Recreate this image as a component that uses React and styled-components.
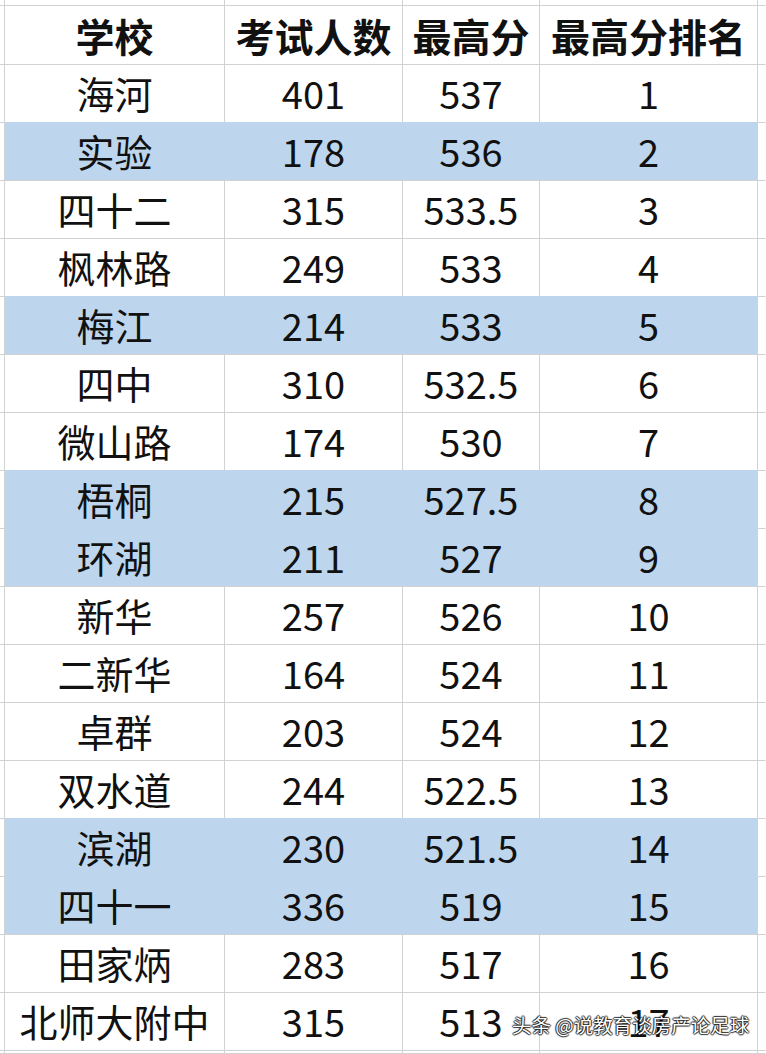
import React from "react";
import styled, { createGlobalStyle } from "styled-components";

const GlobalStyle = createGlobalStyle`
  html, body { margin: 0; padding: 0; background: #ffffff; }
  body { font-family: "Noto Sans CJK SC", "Noto Sans", sans-serif; }
`;

const GRID = "#d2d2d2";
const BLUE = "#bdd6ee";
const COLS = "5px 220px 178px 137px 218px 8px";

const Sheet = styled.div`
  position: relative;
  width: 766px;
  height: 1054px;
  overflow: hidden;
  background: #ffffff;
`;

const Row = styled.div`
  display: grid;
  grid-template-columns: ${COLS};
  height: ${(p) => p.$h}px;
`;

const Cell = styled.div`
  box-sizing: border-box;
  display: flex;
  align-items: center;
  justify-content: center;
  border-right: 1px solid ${(p) => (p.$innerHl ? BLUE : p.$last ? "transparent" : GRID)};
  border-bottom: 1px solid ${(p) => (p.$joinBelow ? BLUE : GRID)};
  background: ${(p) => (p.$hl ? BLUE : "transparent")};
  font-family: "Noto Sans CJK SC", "Noto Sans", sans-serif;
  font-size: ${(p) => (p.$header ? 39 : 38)}px;
  font-weight: ${(p) => (p.$header ? 700 : 400)};
  line-height: 58px;
  color: #111111;
  white-space: nowrap;
  overflow: visible;
`;

const Watermark = styled.div`
  position: absolute;
  left: 512px;
  top: 1010px;
  font-family: "Noto Sans CJK SC", "Noto Sans", sans-serif;
  font-size: 19.5px;
  line-height: 30px;
  color: #ffffff;
  white-space: pre;
  text-shadow:
    1px 0 1px rgba(0, 0, 0, 0.8),
    -1px 0 1px rgba(0, 0, 0, 0.8),
    0 1px 1px rgba(0, 0, 0, 0.8),
    0 -1px 1px rgba(0, 0, 0, 0.8);
`;

const header = ["学校", "考试人数", "最高分", "最高分排名"];

const rows = [
  ["海河", "401", "537", "1", false],
  ["实验", "178", "536", "2", true],
  ["四十二", "315", "533.5", "3", false],
  ["枫林路", "249", "533", "4", false],
  ["梅江", "214", "533", "5", true],
  ["四中", "310", "532.5", "6", false],
  ["微山路", "174", "530", "7", false],
  ["梧桐", "215", "527.5", "8", true],
  ["环湖", "211", "527", "9", true],
  ["新华", "257", "526", "10", false],
  ["二新华", "164", "524", "11", false],
  ["卓群", "203", "524", "12", false],
  ["双水道", "244", "522.5", "13", false],
  ["滨湖", "230", "521.5", "14", true],
  ["四十一", "336", "519", "15", true],
  ["田家炳", "283", "517", "16", false],
  ["北师大附中", "315", "513", "17", false],
];

function SheetRow({ values, h, hl = false, joinBelow = false, header: isHeader = false }) {
  return (
    <Row $h={h}>
      <Cell />
      {values.map((v, i) => (
        <Cell
          key={i}
          $hl={hl}
          $innerHl={hl && i < values.length - 1}
          $joinBelow={joinBelow}
          $header={isHeader}
        >
          {v}
        </Cell>
      ))}
      <Cell $last />
    </Row>
  );
}

export default function App() {
  return (
    <>
      <GlobalStyle />
      <Sheet>
        <SheetRow values={["", "", "", ""]} h={6} />
        <SheetRow values={header} h={58} header />
        {rows.map((r, idx) => {
          const next = rows[idx + 1];
          return (
            <SheetRow
              key={idx}
              values={r.slice(0, 4)}
              h={58}
              hl={r[4]}
              joinBelow={r[4] && next && next[4]}
            />
          );
        })}
        <SheetRow values={["", "", "", ""]} h={4} />
        <Watermark>头条 @说教育谈房产论足球</Watermark>
      </Sheet>
    </>
  );
}
